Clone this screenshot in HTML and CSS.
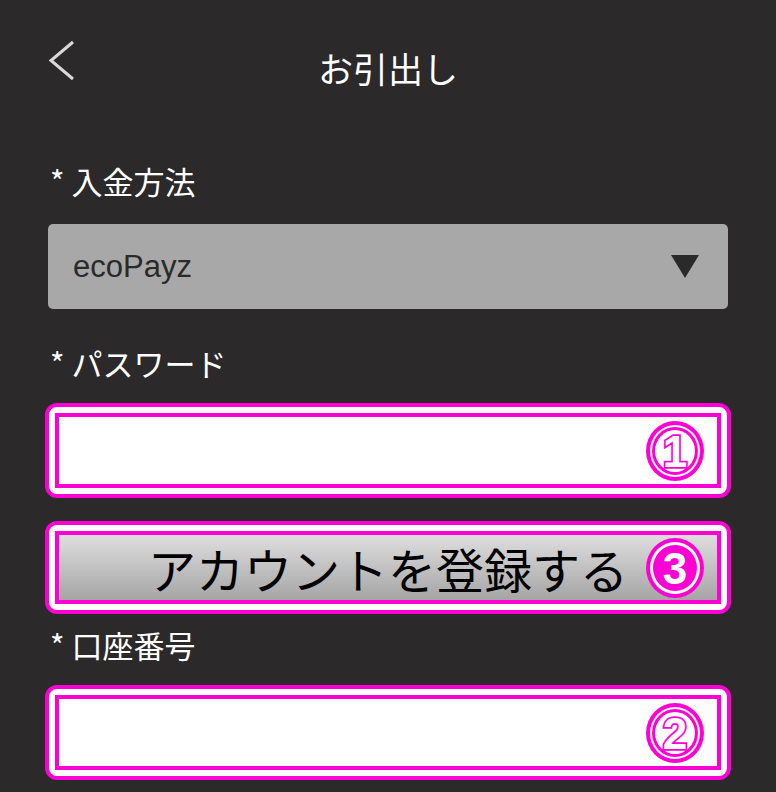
FILE: index.html
```html
<!DOCTYPE html>
<html lang="ja">
<head>
    <meta charset="UTF-8">
    <meta name="viewport" content="width=device-width, initial-scale=1.0">
    <title>お引出し</title>
    <link rel="stylesheet" href="styles.css">
</head>
<body>
    <header class="topbar">
        <a class="back" href="#" aria-label="戻る">
            <svg width="28" height="42" viewBox="0 0 28 42">
                <polyline points="25,2 3,20.5 25,39" fill="none" stroke="#d9d9d9" stroke-width="3"/>
            </svg>
        </a>
        <h1>お引出し</h1>
        <span></span>
    </header>

    <main class="form">
        <div class="label">* 入金方法</div>
        <div class="select">
            <span>ecoPayz</span>
            <span class="arrow"></span>
        </div>

        <div class="label label-gap">* パスワード</div>
        <div class="mark">
            <div class="mark-inner">
                <input type="password">
            </div>
            <svg class="badge" width="60" height="62" viewBox="0 0 60 62">
                <ellipse cx="30" cy="31" rx="29" ry="30" fill="#ff00d4"/>
                <ellipse cx="30" cy="31" rx="25" ry="26" fill="#fff"/>
                <ellipse cx="30" cy="31" rx="23" ry="24" fill="#ff00d4"/>
                <ellipse cx="30" cy="31" rx="20" ry="21" fill="#fff"/>
                <text x="30" y="47" class="digit">1</text>
            </svg>
        </div>

        <div class="mark mark-btn">
            <div class="mark-inner btn">アカウントを登録する</div>
            <svg class="badge" width="60" height="62" viewBox="0 0 60 62">
                <ellipse cx="30" cy="31" rx="29" ry="30" fill="#ff00d4"/>
                <ellipse cx="30" cy="31" rx="25" ry="26" fill="#fff"/>
                <ellipse cx="30" cy="31" rx="22" ry="23" fill="#ff00d4"/>
                <text x="30" y="47" class="digit solid">3</text>
            </svg>
        </div>

        <div class="label label-gap2">* 口座番号</div>
        <div class="mark">
            <div class="mark-inner">
                <input type="text">
            </div>
            <svg class="badge" width="60" height="62" viewBox="0 0 60 62">
                <ellipse cx="30" cy="31" rx="29" ry="30" fill="#ff00d4"/>
                <ellipse cx="30" cy="31" rx="25" ry="26" fill="#fff"/>
                <ellipse cx="30" cy="31" rx="23" ry="24" fill="#ff00d4"/>
                <ellipse cx="30" cy="31" rx="20" ry="21" fill="#fff"/>
                <text x="30" y="47" class="digit">2</text>
            </svg>
        </div>
    </main>
</body>
</html>
```

FILE: styles.css
```css
:root {
    --bg: #2b292a;
    --pink: #ff00d4;
    --select: #a8a8a8;
}
body {
    margin: 0;
    background: var(--bg);
    color: #fff;
    font-family: "Noto Sans CJK JP", "Noto Sans", sans-serif;
}
.topbar {
    display: grid;
    grid-template-columns: 1fr auto 1fr;
    align-items: center;
    height: 134px;
    padding: 0 48px;
}
.back {
    display: flex;
    margin-bottom: 12px;
}
.topbar h1 {
    margin: 0;
    font-size: 35px;
    font-weight: 400;
    line-height: 1;
}
.form {
    padding: 0 48px 20px;
}
.label {
    font-size: 31px;
    line-height: 40px;
    margin-top: 27px;
    padding-left: 2px;
}
.label-gap {
    margin-top: 34px;
}
.label-gap2 {
    margin-top: 11px;
}
.select {
    display: flex;
    align-items: center;
    justify-content: space-between;
    height: 85px;
    margin-top: 23px;
    padding: 0 29px 0 25px;
    background: var(--select);
    border-radius: 5px;
    color: #2a2a2a;
    font-family: "Liberation Sans", Arial, sans-serif;
    font-size: 31px;
}
.arrow {
    width: 0;
    height: 0;
    border-left: 14px solid transparent;
    border-right: 14px solid transparent;
    border-top: 23px solid #2a2a2a;
}
.mark {
    position: relative;
    margin: 20px -3px 0;
    padding: 6px;
    border: 4px solid var(--pink);
    border-radius: 12px;
    background: #fff;
}
.mark-btn {
    margin-top: 23px;
}
.mark-inner {
    height: 67px;
    border: 4px solid var(--pink);
    background: #fff;
}
.mark-inner input {
    width: 100%;
    height: 100%;
    border: none;
    padding: 0 16px;
    box-sizing: border-box;
    outline: none;
    font-size: 28px;
    background: transparent;
}
.btn {
    height: 65px;
    display: flex;
    align-items: center;
    justify-content: center;
    background: linear-gradient(#dedede, #a5a5a5);
    color: #000;
    font-size: 48px;
    line-height: 1;
}
.badge {
    position: absolute;
    right: 22px;
    top: 50%;
    transform: translateY(-50%);
}
.digit {
    font-family: "Liberation Sans", Arial, sans-serif;
    font-weight: 700;
    font-size: 44px;
    text-anchor: middle;
    fill: #fff;
    stroke: var(--pink);
    stroke-width: 3.5px;
    paint-order: stroke;
}
.digit.solid {
    stroke: none;
}
```
